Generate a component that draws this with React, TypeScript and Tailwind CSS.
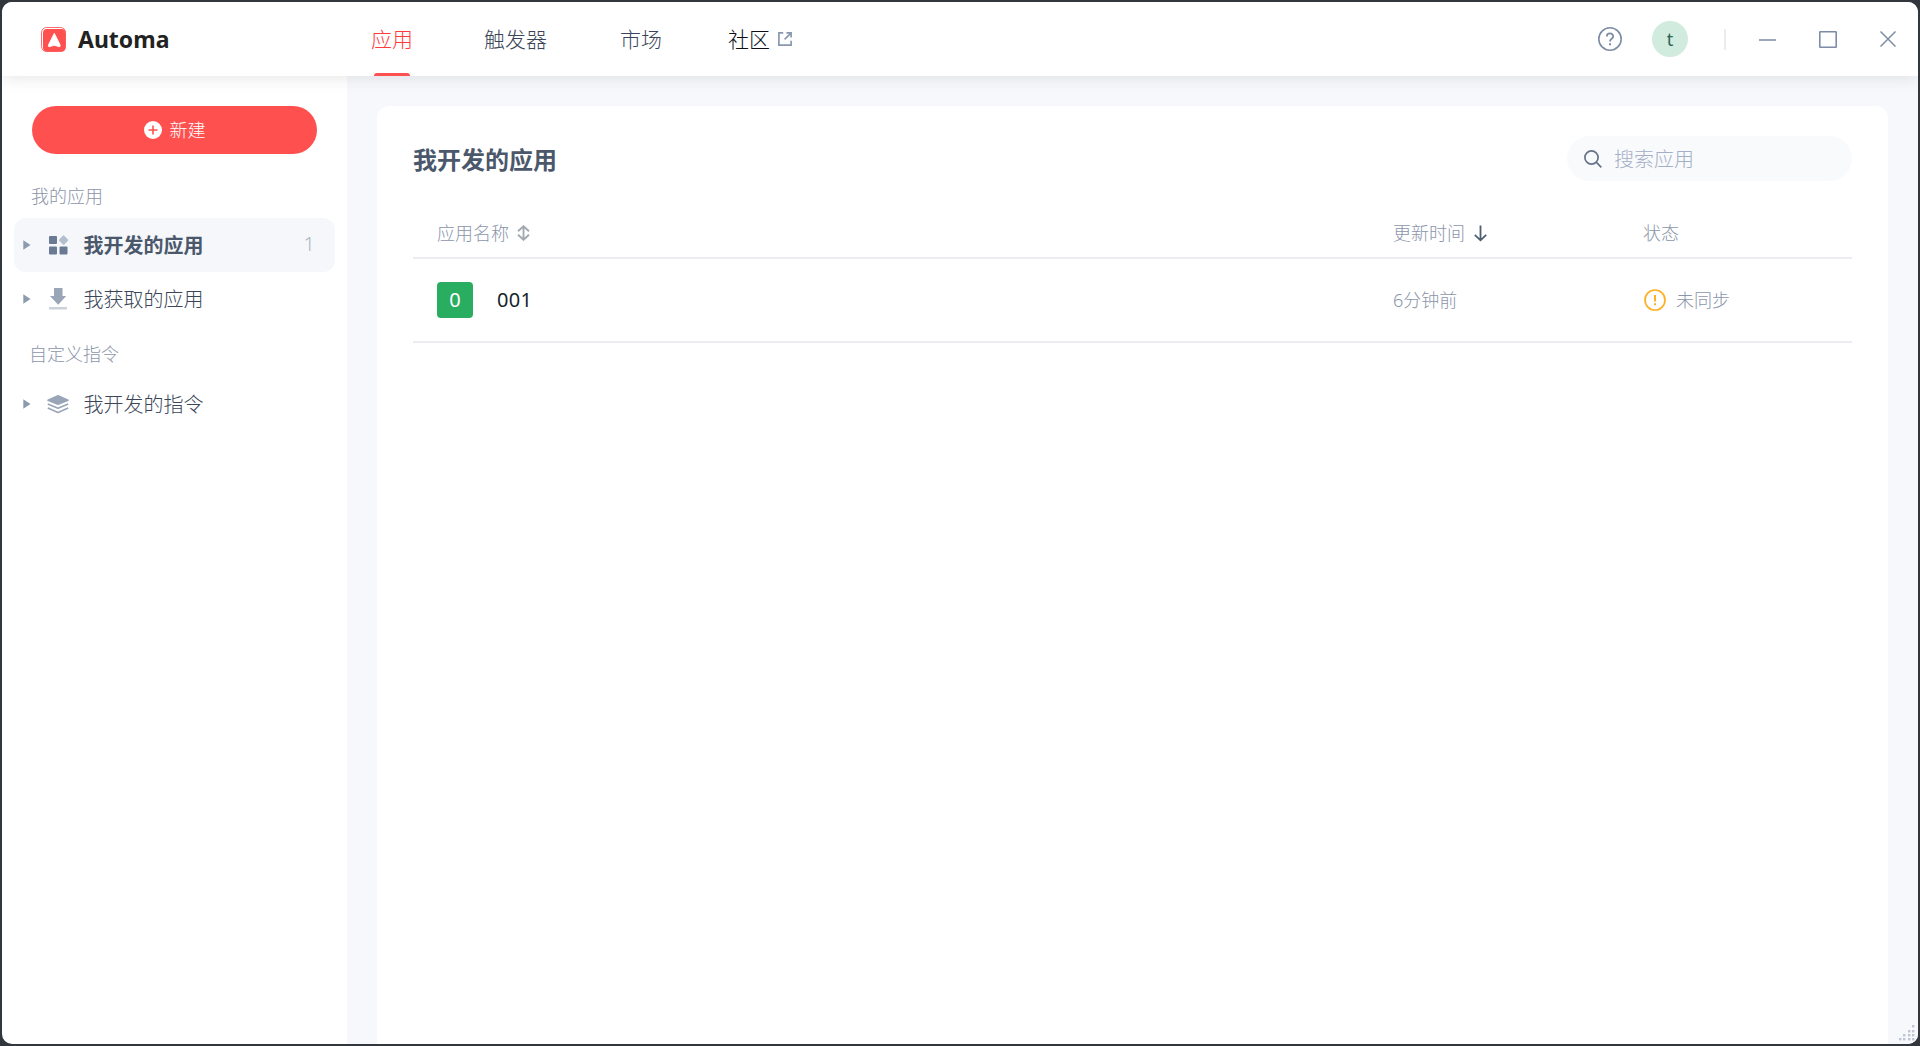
import type { ReactNode } from 'react';

function Logo() {
  return (
    <svg width="25" height="25" viewBox="0 0 25 25">
      <rect x="0.5" y="0.5" width="24" height="24" rx="5" fill="#fff" stroke="#ff6b6b" />
      <rect x="2" y="2" width="22.5" height="22.5" rx="4" fill="#ff5050" />
      <path d="M13.3 6.2 L19.2 18 Q19.700 20 17.700 19.700 L16 19 Q13.3 17.8 10.6 19 L8.900 19.700 Q6.900 20 7.400 18 Z" fill="#fff" stroke="#fff" strokeWidth="0.8" strokeLinejoin="round" />
    </svg>
  );
}

function PlusIcon() {
  return (
    <svg width="18" height="18" viewBox="0 0 18 18">
      <circle cx="9" cy="9" r="9" fill="#fff" />
      <path d="M9 4.5v9M4.5 9h9" stroke="#ff5050" strokeWidth="1.6" />
    </svg>
  );
}

function ExternalIcon() {
  return (
    <svg width="14" height="14" viewBox="0 0 14 14" fill="none" stroke="#8a98ae" strokeWidth="1.7">
      <path d="M5.2 0.9H0.9V13.1H13.1V8.8" />
      <path d="M8.400 0.9H13.1V5.6M13 1L6.6 7.4" />
    </svg>
  );
}

function GridIcon() {
  return (
    <svg width="20" height="20" viewBox="0 0 20 20" fill="#6b7a94">
      <rect x="0" y="1" width="8" height="8" rx="1" />
      <rect x="0" y="11.500" width="8" height="8" rx="1" />
      <rect x="10.500" y="11.500" width="8" height="8" rx="1" />
      <rect x="11" y="1.500" width="7.200" height="7.200" rx="1" fill="#b4bfcd" transform="rotate(45 14.600 5.100)" />
    </svg>
  );
}

function DownloadIcon() {
  return (
    <svg width="18" height="22" viewBox="0 0 18 22" fill="#9aa5b8">
      <path d="M5 0h8.500v8H17.200L9.200 16.800L1 8H5Z" />
      <rect x="0" y="19" width="18" height="2.600" rx="0.500" fill="#cbd2dc" />
    </svg>
  );
}

function LayersIcon() {
  return (
    <svg width="22" height="19" viewBox="0 0 22 19" fill="none" stroke="#9aa5b8" strokeWidth="1.600" strokeLinejoin="round">
      <path d="M11 0.800L21 5.200L11 9.200L1 5.200Z" fill="#9aa5b8" />
      <path d="M0.800 9L11 13.200L21.200 9M0.800 13L11 17.400L21.200 13" />
    </svg>
  );
}

function HelpIcon() {
  return (
    <svg width="24" height="24" viewBox="0 0 24 24" fill="none" stroke="#7d8ca5" strokeWidth="1.600">
      <circle cx="12" cy="12" r="11.200" />
      <path d="M8.800 9.600C8.800 5.400 15.200 5.500 15.200 9.400C15.200 11.800 12 11.800 12 14.500" strokeWidth="1.800" />
      <path d="M12 16.200v2" strokeWidth="2" />
    </svg>
  );
}

function SortIcon() {
  return (
    <svg width="13" height="16" viewBox="0 0 13 16" fill="none" stroke="#a3a9b1" strokeWidth="1.900">
      <path d="M6.500 1v14M1 6.200L6.500 1.200L12 6.200M1 9.800L6.500 14.800L12 9.800" />
    </svg>
  );
}

function DownArrow() {
  return (
    <svg width="13" height="17" viewBox="0 0 13 17" fill="none" stroke="#4e5d70" strokeWidth="1.800">
      <path d="M6.500 0.500v15M0.800 9.800L6.500 15.300L12.200 9.800" />
    </svg>
  );
}

function SearchIcon() {
  return (
    <svg width="18" height="18" viewBox="0 0 18 18" fill="none" stroke="#667388" strokeWidth="1.700">
      <circle cx="7.500" cy="7.500" r="6.600" />
      <path d="M12.200 12.200L17.300 17.300" />
    </svg>
  );
}

function WarnIcon() {
  return (
    <svg width="22" height="22" viewBox="0 0 22 22" fill="none" stroke="#ffb020">
      <circle cx="11" cy="11" r="10" strokeWidth="1.700" />
      <path d="M11 6v6.500M11 14.300v2" strokeWidth="2" />
    </svg>
  );
}

function ResizeGrip() {
  const dots = [[13, 0], [9, 5], [13, 5], [4, 9], [9, 9], [13, 9], [0, 13], [4, 13], [9, 13], [13, 13]];
  return (
    <svg className="absolute right-[3px] bottom-[3px]" width="16" height="16" viewBox="0 0 16 16" fill="#bcc5d4">
      {dots.map(([x, y]) => (
        <rect key={`${x}-${y}`} x={x} y={y} width="2.400" height="2.400" />
      ))}
    </svg>
  );
}

function NavItem({ icon, label, count, active }: { icon: ReactNode; label: string; count?: string; active?: boolean }) {
  return (
    <div className={`flex h-[54px] items-center rounded-xl pr-[20px] pl-[9px] ${active ? 'bg-[#f5f7fb] font-bold text-[#4b586b]' : 'font-light text-[#3a4658]'}`}>
      <svg width="8" height="10" viewBox="0 0 8 10" fill="#8d99ad">
        <path d="M0.300 0.300L7.500 5L0.300 9.700Z" />
      </svg>
      <div className="ml-[15px] flex w-[24px] justify-center">{icon}</div>
      <span className="ml-[13.500px] flex-1 pt-[2px] text-[20px] leading-[24px]">{label}</span>
      {count && <span className="pb-[2px] text-[20px] leading-[24px] font-light text-[#aeb8c6]">{count}</span>}
    </div>
  );
}

export default function App() {
  return (
    <div className="h-[1046px] w-[1920px] bg-[#32363d] p-[2px] font-['Noto_Sans','Noto_Sans_CJK_SC',sans-serif]">
      <div className="relative flex h-full flex-col overflow-hidden rounded-[10px] bg-white">
        <header className="z-10 flex h-[74px] shrink-0 items-center bg-white shadow-[0_2px_16px_rgba(0,0,0,0.1)]">
          <div className="flex w-[369px] items-center gap-3 pl-[39px]">
            <Logo />
            <span className="text-[23px] leading-[28px] font-bold text-[#222]">Automa</span>
          </div>
          <nav className="flex h-full items-center text-[21px] leading-[26px] font-light text-[#3a4658]">
            <div className="relative flex h-full w-[113px] items-center text-[#ff3c3c]">
              应用
              <span className="absolute bottom-0 left-[3px] h-[3px] w-[36px] rounded-t-[3px] bg-[#ff5050]" />
            </div>
            <div className="w-[136px]">触发器</div>
            <div className="w-[108px]">市场</div>
            <div className="flex items-center gap-2 text-[#0c1016]">
              社区
              <ExternalIcon />
            </div>
          </nav>
          <div className="ml-auto flex items-center pr-[22px]">
            <HelpIcon />
            <div className="ml-[30px] flex h-9 w-9 items-center justify-center rounded-full bg-[#d1ebde] text-[18px] leading-none text-[#2c6350]">t</div>
            <div className="ml-[36px] h-[21px] w-[2px] bg-[#ebebf0]" />
            <svg className="ml-[33px]" width="17" height="17" viewBox="0 0 17 17" fill="none" stroke="#7d8ca5" strokeWidth="1.600">
              <path d="M0 9h17" />
            </svg>
            <svg className="ml-[43px]" width="18" height="17" viewBox="0 0 18 17" fill="none" stroke="#7d8ca5" strokeWidth="1.600">
              <rect x="0.800" y="0.800" width="16.400" height="15.400" rx="0.500" />
            </svg>
            <svg className="ml-[43px]" width="16" height="16" viewBox="0 0 16 16" fill="none" stroke="#7d8ca5" strokeWidth="1.500">
              <path d="M0.500 0.500L15.500 15.500M15.500 0.500L0.500 15.500" />
            </svg>
          </div>
        </header>

        <div className="flex min-h-0 flex-1">
          <aside className="w-[345px] shrink-0 px-[12px] pt-[30px]">
            <button className="ml-[18px] flex h-[48px] w-[285px] items-center justify-center gap-2 rounded-full bg-[#ff5050] text-[18px] leading-none font-light text-white">
              <PlusIcon />
              新建
            </button>
            <div className="mt-[30px] mb-[10px] ml-[17px] text-[18px] leading-[24px] font-light text-[#8b95aa]">我的应用</div>
            <NavItem icon={<div className="ml-[2px]"><GridIcon /></div>} label="我开发的应用" count="1" active />
            <NavItem icon={<DownloadIcon />} label="我获取的应用" />
            <div className="mt-[16px] mb-[11px] ml-[15px] text-[18px] leading-[24px] font-light text-[#8b95aa]">自定义指令</div>
            <NavItem icon={<LayersIcon />} label="我开发的指令" />
          </aside>

          <main className="flex flex-1 bg-[#f6f8fc] px-[30px] pt-[30px]">
            <section className="flex-1 rounded-t-xl bg-white px-[36px] pt-[30px]">
              <div className="flex h-[45px] items-center justify-between">
                <h1 className="pt-[2px] text-[24px] leading-[30px] font-bold text-[#4b586b]">我开发的应用</h1>
                <div className="flex h-[45px] w-[285px] items-center gap-[12px] rounded-full bg-[#f9fafc] pl-[17px] text-[20px] leading-none font-light text-[#a3afc6]">
                  <SearchIcon />
                  <span className="pt-[2px]">搜索应用</span>
                </div>
              </div>
              <div className="mt-[28px] flex h-[50px] items-center border-b-2 border-[#ebecf1] pl-[24px] text-[18px] leading-none font-light text-[#8b95aa]">
                <div className="flex w-[956px] items-center gap-[8px]">应用名称 <SortIcon /></div>
                <div className="flex w-[250px] items-center gap-[9px]">更新时间 <DownArrow /></div>
                <div>状态</div>
              </div>
              <div className="flex h-[84px] items-center border-b-2 border-[#ebecf1] pl-[24px] text-[18px] leading-none font-light text-[#8b95aa]">
                <div className="-mt-px flex w-[956px] items-center gap-[24px]">
                  <div className="flex h-9 w-9 items-center justify-center rounded bg-[#29ad60] text-[20px] font-normal text-white">0</div>
                  <span className="text-[20px] font-normal tracking-[0.3px] text-[#161f2c]">001</span>
                </div>
                <div className="w-[251px]">6分钟前</div>
                <div className="flex items-center gap-[10px]"><WarnIcon /> 未同步</div>
              </div>
            </section>
          </main>
        </div>
        <ResizeGrip />
      </div>
    </div>
  );
}
